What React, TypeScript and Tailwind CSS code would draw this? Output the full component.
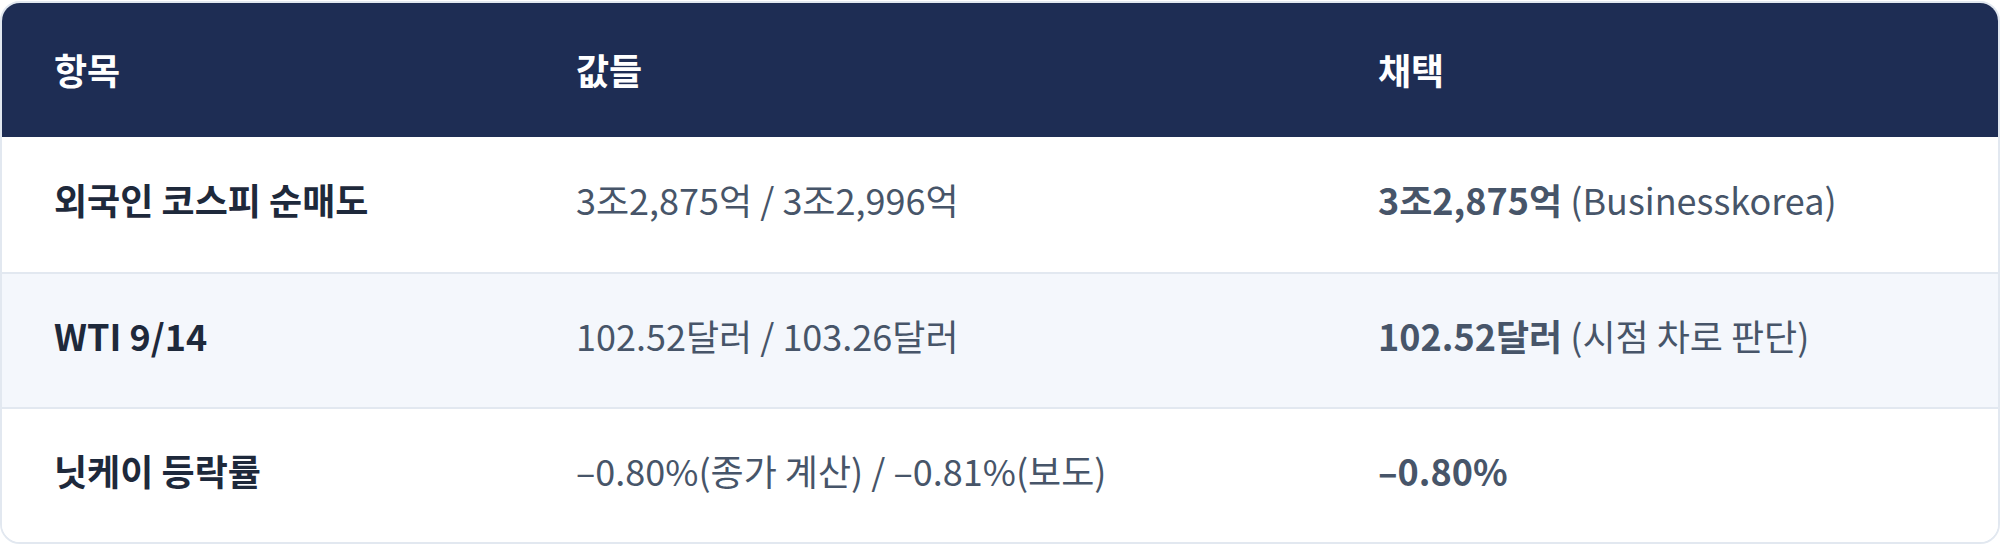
import React from 'react';

type Row = {
  item: string;
  values: string;
  pick: string;
  note?: string;
};

const rows: Row[] = [
  { item: '외국인 코스피 순매도', values: '3조2,875억 / 3조2,996억', pick: '3조2,875억', note: '(Businesskorea)' },
  { item: 'WTI 9/14', values: '102.52달러 / 103.26달러', pick: '102.52달러', note: '(시점 차로 판단)' },
  { item: '닛케이 등락률', values: '–0.80%(종가 계산) / –0.81%(보도)', pick: '–0.80%' },
];

const App: React.FC = () => {
  return (
    <div className="w-[2000px] h-[546px] bg-white pt-px font-['Noto_Sans_CJK_KR',sans-serif]">
      <div className="rounded-[20px] border-2 border-[#e2e8f0] overflow-hidden bg-white">
        {/* 헤더 */}
        <div className="grid grid-cols-[522px_802px_1fr] h-[134px] pb-[3px] items-center bg-[#1e2d54] text-white font-bold text-[36px]">
          <div className="pl-[52px]">항목</div>
          <div className="pl-[52px]">값들</div>
          <div className="pl-[52px]">채택</div>
        </div>

        {rows.map((r, i) => (
          <div
            key={r.item}
            className={
              'grid grid-cols-[522px_802px_1fr] h-[135px] pb-[12px] items-center text-[36px] ' +
              (i > 0 ? 'border-t-2 border-[#e2e8f0] ' : '') +
              (i === 1 ? 'bg-[#f4f7fc]' : 'bg-white')
            }
          >
            <div className="pl-[52px] font-bold text-[#1e293b]">{r.item}</div>
            <div className="pl-[52px] text-[#475569]">{r.values}</div>
            <div className="pl-[52px] text-[#475569]">
              <span className="font-bold">{r.pick}</span>
              {r.note && <span> {r.note}</span>}
            </div>
          </div>
        ))}
      </div>
    </div>
  );
};

export default App;
